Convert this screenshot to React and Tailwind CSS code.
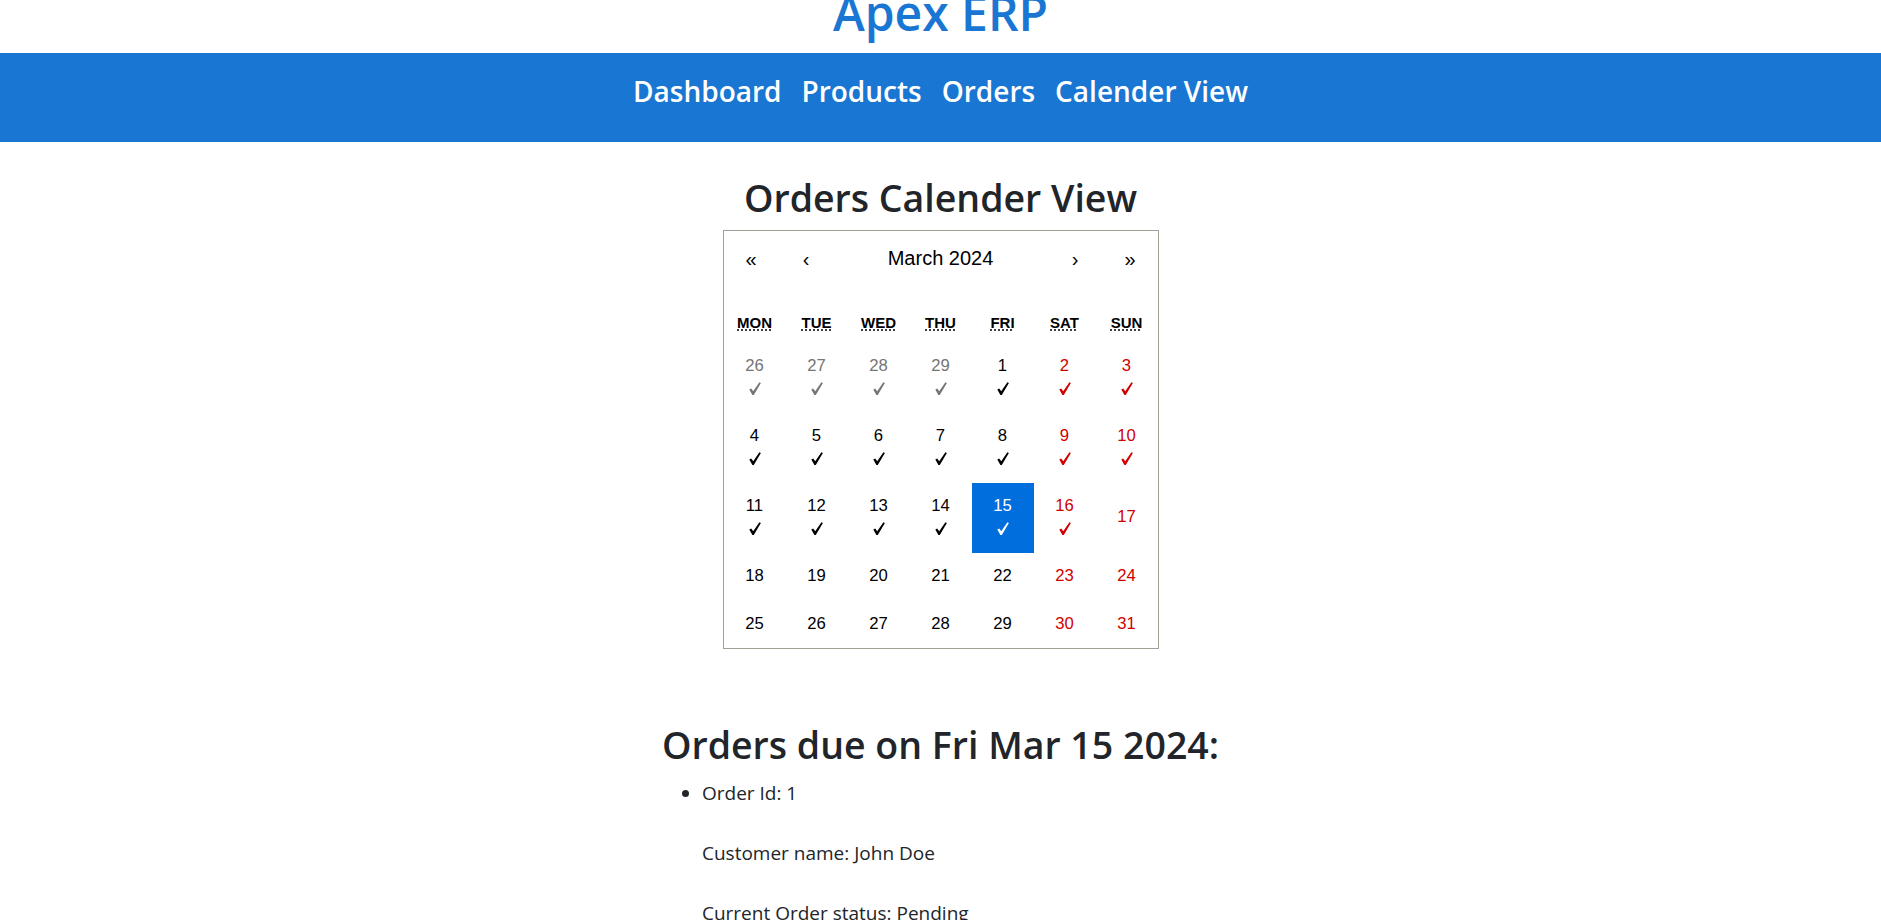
import React from "react";

const sans = "font-['Open_Sans','Noto_Sans',sans-serif]";
const arial = "font-['Liberation_Sans',Arial,sans-serif]";

function Check({ className }) {
  return (
    <svg width="12" height="13" viewBox="0 0 12 13" className={className} fill="currentColor">
      <path d="M0.3 7.5 L2.2 6.4 L4.2 9.3 L10.4 0.2 L11.9 1.1 L4.8 12.9 L3.4 12.9 Z" />
    </svg>
  );
}

const weekdays = ["Mon", "Tue", "Wed", "Thu", "Fri", "Sat", "Sun"];

function buildDays() {
  const days = [];
  [26, 27, 28, 29].forEach((d) => days.push({ d, other: true }));
  for (let d = 1; d <= 31; d++) days.push({ d, other: false });
  return days.map((x, i) => ({
    ...x,
    weekend: i % 7 >= 5,
    check: i < 21 && !(x.d === 17 && !x.other),
    active: x.d === 15 && !x.other,
  }));
}

function Tile({ day }) {
  let color = "text-black";
  if (day.other) color = "text-[#757575]";
  else if (day.weekend) color = "text-[#d10000]";
  if (day.active) color = "text-white bg-[#006edc]";
  return (
    <div className={"flex flex-col items-center justify-center py-[12.5px] px-[6.7px] text-[16.67px] leading-[22.5px] " + color}>
      <span>{day.d}</span>
      {day.check && (
        <span className="h-[22.5px] flex items-center justify-center">
          <Check />
        </span>
      )}
    </div>
  );
}

function Calendar() {
  const days = buildDays();
  const rows = [];
  for (let i = 0; i < days.length; i += 7) rows.push(days.slice(i, i + 7));
  return (
    <div className={"w-[436px] border border-[#a0a096] bg-white text-black " + arial}>
      <div className="flex h-[55px] mb-[19px] text-[20px]">
        <button className="min-w-[55px]">«</button>
        <button className="min-w-[55px]">‹</button>
        <button className="flex-1 pb-[2px]">March 2024</button>
        <button className="min-w-[55px]">›</button>
        <button className="min-w-[55px]">»</button>
      </div>
      <div className="grid grid-cols-7 h-[37.5px] items-center text-center text-[15px] font-bold uppercase">
        {weekdays.map((w) => (
          <abbr key={w} className="underline decoration-dotted underline-offset-2 pb-[2px]">
            {w}
          </abbr>
        ))}
      </div>
      {rows.map((r, i) => (
        <div key={i} className="grid grid-cols-7">
          {r.map((d, j) => (
            <Tile key={j} day={d} />
          ))}
        </div>
      ))}
    </div>
  );
}

export default function App() {
  return (
    <div className={"min-h-screen bg-white text-[#212529] overflow-hidden " + sans}>
      <h1 className="mt-[-17px] mb-[10px] text-center text-[48px] leading-[60px] font-semibold text-[#1976d2]">
        Apex ERP
      </h1>
      <nav className="h-[89px] bg-[#1976d2] flex items-center justify-center gap-[20px] pb-[14px]">
        {["Dashboard", "Products", "Orders", "Calender View"].map((n) => (
          <a key={n} className="text-white text-[28px] font-semibold leading-[40px]">
            {n}
          </a>
        ))}
      </nav>
      <div className="flex flex-col items-center">
        <h2 className="mt-[32px] mb-[8px] text-[37.5px] leading-[48px] font-semibold">Orders Calender View</h2>
        <Calendar />
        <div className="mt-[72px] w-fit text-left">
          <h2 className="mb-[9px] text-[37.5px] leading-[48px] font-semibold">Orders due on Fri Mar 15 2024:</h2>
          <ul className="list-disc pl-[40px] text-[19px] leading-[30px]">
            <li>
              Order Id: 1
              <br />
              <br />
              Customer name: John Doe
              <br />
              <br />
              Current Order status: Pending
            </li>
          </ul>
        </div>
      </div>
    </div>
  );
}
